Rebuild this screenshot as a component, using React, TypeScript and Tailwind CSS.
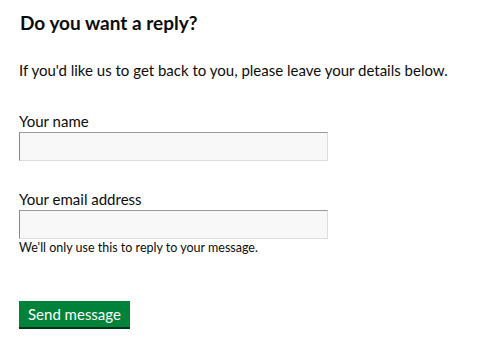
export default function App() {
  return (
    <div className="bg-white w-[485px] h-[346px] px-[19px] pt-[9px] text-[#0b0c0c]" style={{ fontFamily: 'Lato, Arial, sans-serif' }}>
      <h2 className="text-[19px] leading-[28px] font-bold ml-[1px]">Do you want a reply?</h2>
      <p className="text-[15px] leading-[20px] mt-[23px] whitespace-nowrap">If you'd like us to get back to you, please leave your details below.</p>
      <div className="mt-[31px]">
        <label className="block text-[15px] leading-[20px]">Your name</label>
        <input className="block mt-[1px] w-[309px] h-[29px] bg-[#f8f8f8] border border-t-[#9a9a9a] border-l-[#8a8a8a] border-r-[#dddddd] border-b-[#dddddd] outline-none" />
      </div>
      <div className="mt-[28px]">
        <label className="block text-[15px] leading-[20px]">Your email address</label>
        <input className="block mt-[1px] w-[309px] h-[29px] bg-[#f8f8f8] border border-t-[#9a9a9a] border-l-[#8a8a8a] border-r-[#dddddd] border-b-[#dddddd] outline-none" />
        <p className="text-[12.5px] leading-[16px] mt-[1px]">We'll only use this to reply to your message.</p>
      </div>
      <button className="block mt-[45px] h-[26px] px-[9px] bg-[#00823b] text-white text-[15px] leading-[20px] shadow-[0_2px_0_#003618]">Send message</button>
    </div>
  );
}
